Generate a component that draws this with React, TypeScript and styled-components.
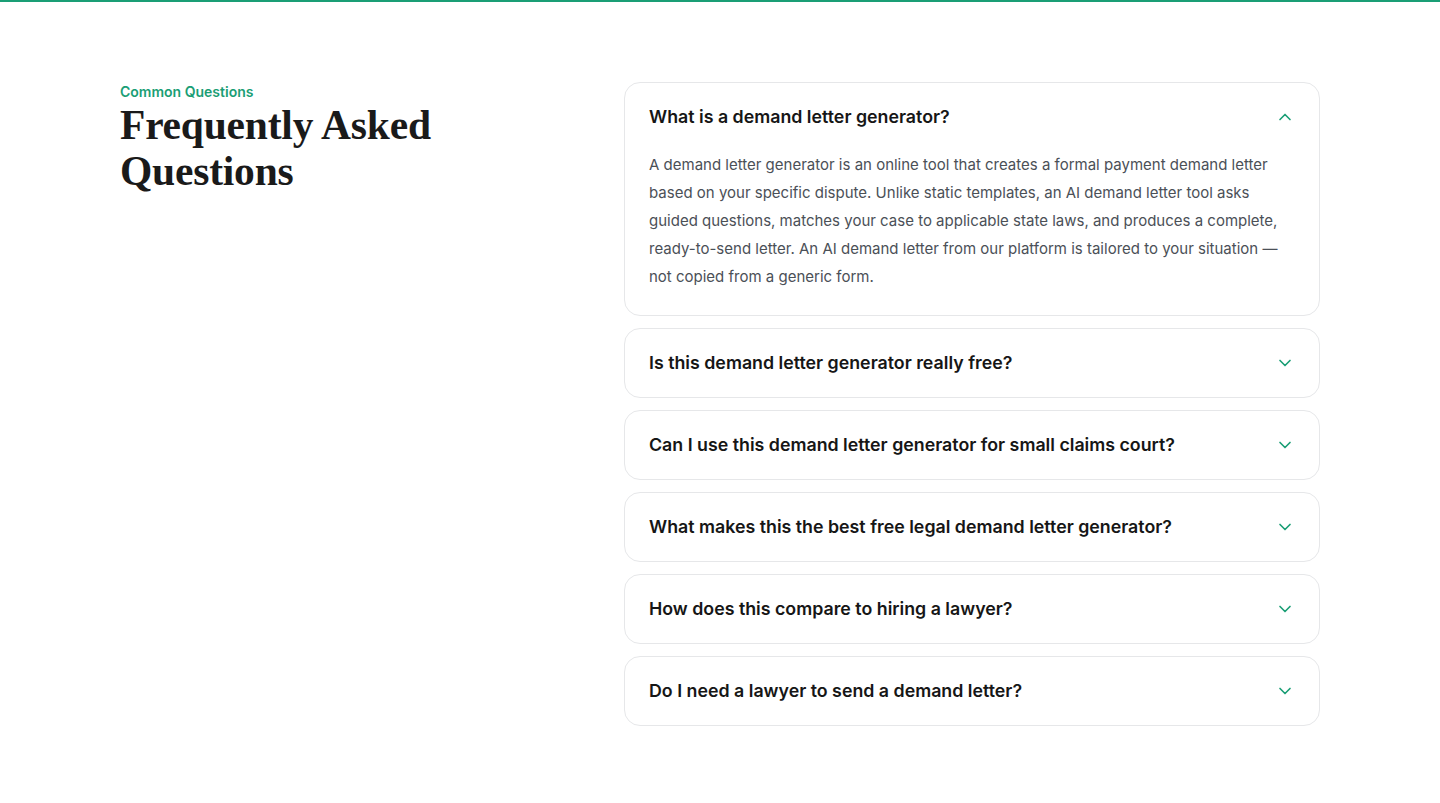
import React, { useState } from "react";
import styled, { createGlobalStyle } from "styled-components";

const GlobalStyle = createGlobalStyle`
  html, body { margin: 0; padding: 0; background: #ffffff; }
  body { font-family: Inter, "Noto Sans", sans-serif; color: #1a1a1a; -webkit-font-smoothing: antialiased; }
  * { box-sizing: border-box; }
`;

const Page = styled.div`
  min-height: 803px;
  border-top: 2px solid #1a9e75;
  background: #fff;
`;

const Section = styled.section`
  max-width: 1200px;
  margin: 0 auto;
  padding: 80px 0 76px;
  display: grid;
  grid-template-columns: 440px 1fr;
  gap: 64px;
  align-items: start;
`;

const Intro = styled.div`
  display: flex;
  flex-direction: column;
`;

const Eyebrow = styled.span`
  font-family: Inter, sans-serif;
  font-size: 14px;
  line-height: 20px;
  font-weight: 600;
  color: #1a9e75;
`;

const Title = styled.h2`
  margin: 0;
  font-family: "Liberation Serif", "DejaVu Serif", serif;
  font-weight: 700;
  font-size: 41.5px;
  line-height: 46px;
  letter-spacing: -0.2px;
  color: #1a1a1a;
`;

const List = styled.div`
  display: flex;
  flex-direction: column;
  gap: 12px;
`;

const Card = styled.div`
  border: 1px solid #e6e7e9;
  border-radius: 16px;
  background: #fff;
`;

const Header = styled.button`
  width: 100%;
  display: flex;
  align-items: center;
  justify-content: space-between;
  gap: 16px;
  padding: 20px 24px;
  background: none;
  border: none;
  cursor: pointer;
  text-align: left;
  font-family: Inter, sans-serif;
`;

const Question = styled.span`
  font-size: 17.8px;
  line-height: 28px;
  font-weight: 600;
  color: #161616;
`;

const Answer = styled.p`
  margin: 0;
  padding: 0 24px 24px;
  font-family: Inter, sans-serif;
  font-size: 15px;
  line-height: 28px;
  color: #4b5057;
`;

const Chevron = styled.svg<{ $open: boolean }>`
  flex: none;
  width: 20px;
  height: 20px;
  transform: rotate(${(p) => (p.$open ? "180deg" : "0deg")});
`;

const faqs = [
  {
    q: "What is a demand letter generator?",
    a: "A demand letter generator is an online tool that creates a formal payment demand letter based on your specific dispute. Unlike static templates, an AI demand letter tool asks guided questions, matches your case to applicable state laws, and produces a complete, ready-to-send letter. An AI demand letter from our platform is tailored to your situation — not copied from a generic form.",
  },
  {
    q: "Is this demand letter generator really free?",
    a: "Yes. You can create, preview and download your demand letter without paying anything.",
  },
  {
    q: "Can I use this demand letter generator for small claims court?",
    a: "Yes. A demand letter is often a required first step before filing in small claims court.",
  },
  {
    q: "What makes this the best free legal demand letter generator?",
    a: "It combines guided questions, state-specific law references and a professional format.",
  },
  {
    q: "How does this compare to hiring a lawyer?",
    a: "A lawyer can cost hundreds of dollars for a single letter, while this tool is free.",
  },
  {
    q: "Do I need a lawyer to send a demand letter?",
    a: "No. Anyone can send a demand letter on their own behalf.",
  },
];

export default function App() {
  const [open, setOpen] = useState<number>(0);
  return (
    <Page>
      <GlobalStyle />
      <Section>
        <Intro>
          <Eyebrow>Common Questions</Eyebrow>
          <Title>
            Frequently Asked
            <br />
            Questions
          </Title>
        </Intro>
        <List>
          {faqs.map((f, i) => (
            <Card key={f.q}>
              <Header onClick={() => setOpen(open === i ? -1 : i)}>
                <Question>{f.q}</Question>
                <Chevron
                  $open={open === i}
                  viewBox="0 0 24 24"
                  fill="none"
                  stroke="#1a9e75"
                  strokeWidth="2"
                  strokeLinecap="round"
                  strokeLinejoin="round"
                >
                  <path d="m6 9 6 6 6-6" />
                </Chevron>
              </Header>
              {open === i && <Answer>{f.a}</Answer>}
            </Card>
          ))}
        </List>
      </Section>
    </Page>
  );
}
